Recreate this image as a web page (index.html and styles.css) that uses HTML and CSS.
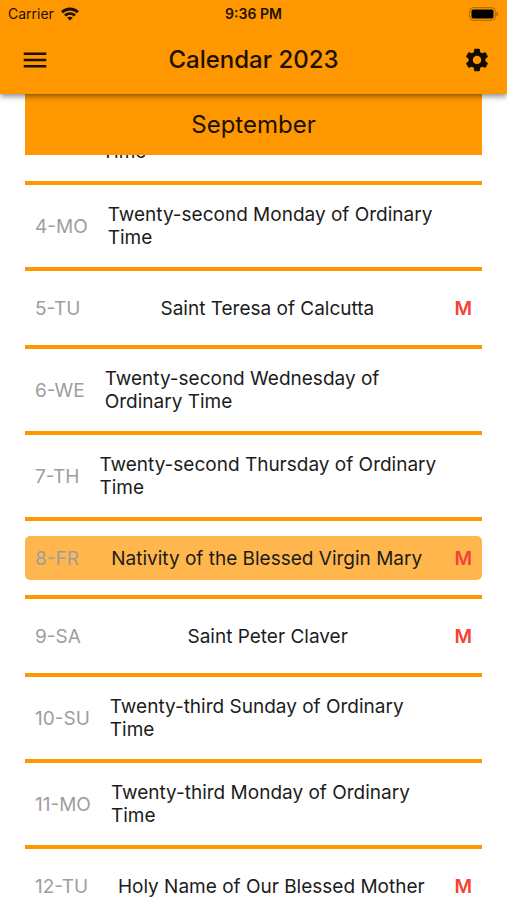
FILE: index.html
```html
<!DOCTYPE html>
<html lang="en">
<head>
    <meta charset="utf-8">
    <meta name="viewport" content="width=device-width, initial-scale=1">
    <title>Calendar 2023</title>
    <link rel="stylesheet" href="styles.css">
</head>
<body>
    <header class="app-bar">
        <div class="status">
            <div class="carrier">
                <span>Carrier</span>
                <svg width="18" height="14" viewBox="0 0 18 14" fill="none" stroke="#1c1100" stroke-width="2.8">
                    <path d="M1 5.2C5.5 .9 12.500 .9 17 5.200"/>
                    <path d="M4 8.600C6.900 5.900 11.100 5.900 14 8.600"/>
                    <path d="M9 13.500L6.100 10.800C7.700 9.400 10.300 9.400 11.900 10.800Z" fill="#1c1100" stroke="none"/>
                </svg>
            </div>
            <span class="time">9:36 PM</span>
            <div class="battery">
                <svg width="30" height="14" viewBox="0 0 30 14">
                    <rect x=".7" y=".7" width="25.600" height="12.600" rx="3.500" fill="none" stroke="#a86400"/>
                    <rect x="2.500" y="2.500" width="22" height="9" rx="1.800" fill="#000"/>
                    <path d="M27.500 4.800C29.800 5.400 29.800 8.600 27.500 9.200Z" fill="#a86400"/>
                </svg>
            </div>
        </div>
        <div class="toolbar">
            <button class="icon-btn" aria-label="Menu">
                <svg width="30" height="30" viewBox="0 0 24 24" fill="#1c1100">
                    <path d="M3 18h18v-2H3v2zm0-5h18v-2H3v2zm0-7v2h18V6H3z"/>
                </svg>
            </button>
            <h1>Calendar 2023</h1>
            <button class="icon-btn settings" aria-label="Settings">
                <svg width="28" height="28" viewBox="0 0 24 24" fill="#140c00">
                    <path d="M19.140 12.940c.040-.300.060-.610.060-.940 0-.320-.020-.640-.070-.940l2.030-1.580c.180-.140.230-.410.120-.610l-1.920-3.320c-.120-.220-.370-.290-.590-.220l-2.390.960c-.500-.380-1.030-.700-1.620-.940l-.360-2.540c-.040-.240-.240-.410-.480-.410h-3.840c-.240 0-.430.170-.470.410l-.360 2.540c-.590.240-1.130.570-1.620.940l-2.390-.960c-.220-.080-.470 0-.590.220L2.740 8.870c-.120.210-.080.470.120.610l2.030 1.580c-.050.300-.090.630-.090.940s.020.640.070.940l-2.030 1.580c-.180.140-.230.410-.120.610l1.920 3.320c.120.220.370.290.590.220l2.390-.960c.500.380 1.030.700 1.620.940l.360 2.540c.050.240.240.410.480.410h3.840c.240 0 .440-.170.470-.410l.360-2.540c.590-.240 1.130-.560 1.620-.940l2.390.960c.220.080.470 0 .590-.220l1.920-3.320c.120-.220.070-.470-.120-.610l-2.010-1.580zM12 15.600c-1.980 0-3.600-1.620-3.600-3.600s1.620-3.600 3.600-3.600 3.600 1.620 3.600 3.600-1.620 3.600-3.600 3.600z"/>
                </svg>
            </button>
        </div>
    </header>

    <main>
        <h2 class="month">September</h2>
        <ul class="days">
            <li><div class="day">
                <span class="date">3-SU</span>
                <span class="name">Twenty-second Sunday of Ordinary Time</span>
                <span class="rank"></span>
            </div></li>
            <li><div class="day">
                <span class="date">4-MO</span>
                <span class="name">Twenty-second Monday of Ordinary Time</span>
                <span class="rank"></span>
            </div></li>
            <li><div class="day">
                <span class="date">5-TU</span>
                <span class="name">Saint Teresa of Calcutta</span>
                <span class="rank">M</span>
            </div></li>
            <li><div class="day">
                <span class="date">6-WE</span>
                <span class="name">Twenty-second Wednesday of Ordinary Time</span>
                <span class="rank"></span>
            </div></li>
            <li><div class="day">
                <span class="date">7-TH</span>
                <span class="name">Twenty-second Thursday of Ordinary Time</span>
                <span class="rank"></span>
            </div></li>
            <li><div class="day today">
                <span class="date">8-FR</span>
                <span class="name">Nativity of the Blessed Virgin Mary</span>
                <span class="rank">M</span>
            </div></li>
            <li><div class="day">
                <span class="date">9-SA</span>
                <span class="name">Saint Peter Claver</span>
                <span class="rank">M</span>
            </div></li>
            <li><div class="day">
                <span class="date">10-SU</span>
                <span class="name">Twenty-third Sunday of Ordinary Time</span>
                <span class="rank"></span>
            </div></li>
            <li><div class="day">
                <span class="date">11-MO</span>
                <span class="name">Twenty-third Monday of Ordinary Time</span>
                <span class="rank"></span>
            </div></li>
            <li><div class="day">
                <span class="date">12-TU</span>
                <span class="name">Holy Name of Our Blessed Mother</span>
                <span class="rank">M</span>
            </div></li>
        </ul>
    </main>
</body>
</html>
```
FILE: styles.css
```css
* {
    box-sizing: border-box;
}

html {
    scrollbar-width: none;
}

body {
    margin: 0;
    background: #fff;
    color: #1c1c1c;
    font-family: Inter, "Liberation Sans", sans-serif;
}

h1, h2 {
    margin: 0;
    font-size: 24px;
    font-weight: 400;
    color: #1c1100;
}

/* Top bar */
.app-bar {
    position: sticky;
    top: 0;
    z-index: 3;
    background: #ff9800;
    box-shadow: 0 2px 6px rgba(0, 0, 0, 0.5);
}

.status {
    display: grid;
    grid-template-columns: 1fr auto 1fr;
    align-items: center;
    height: 27px;
    padding: 0 8px;
    font-size: 14px;
    color: #1c1100;
}

.carrier {
    display: flex;
    align-items: center;
    gap: 7px;
}

.time {
    font-weight: 600;
}

.battery {
    display: flex;
    justify-content: flex-end;
}

.toolbar {
    display: grid;
    grid-template-columns: 1fr auto 1fr;
    align-items: center;
    height: 67px;
    padding: 0 10px 2px;
}

.toolbar h1 {
    font-weight: 500;
}

.icon-btn {
    display: flex;
    align-items: center;
    justify-content: center;
    width: 50px;
    height: 40px;
    padding: 0;
    border: 0;
    background: none;
}

.settings {
    width: 40px;
    justify-self: end;
}

/* Calendar */
main {
    padding: 0 25px;
}

.month {
    position: sticky;
    top: 94px;
    z-index: 2;
    padding: 15px 0;
    background: #ff9800;
    line-height: 31px;
    text-align: center;
}

.days {
    list-style: none;
    margin: -56px 0 0;
    padding: 0;
    font-size: 19px;
    line-height: 23px;
}

.days li {
    padding: 15px 0;
    border-bottom: 4px solid #ff9800;
}

.day {
    display: flex;
    align-items: center;
    justify-content: space-between;
    min-height: 44px;
    padding: 3px 10px;
    border-radius: 5px;
}

.today {
    background: #ffb74d;
}

.date {
    flex: none;
    color: #9e9e9e;
}

.name {
    margin: 0 20px;
}

.rank {
    flex: none;
    font-weight: 600;
    color: #f44336;
}
```
